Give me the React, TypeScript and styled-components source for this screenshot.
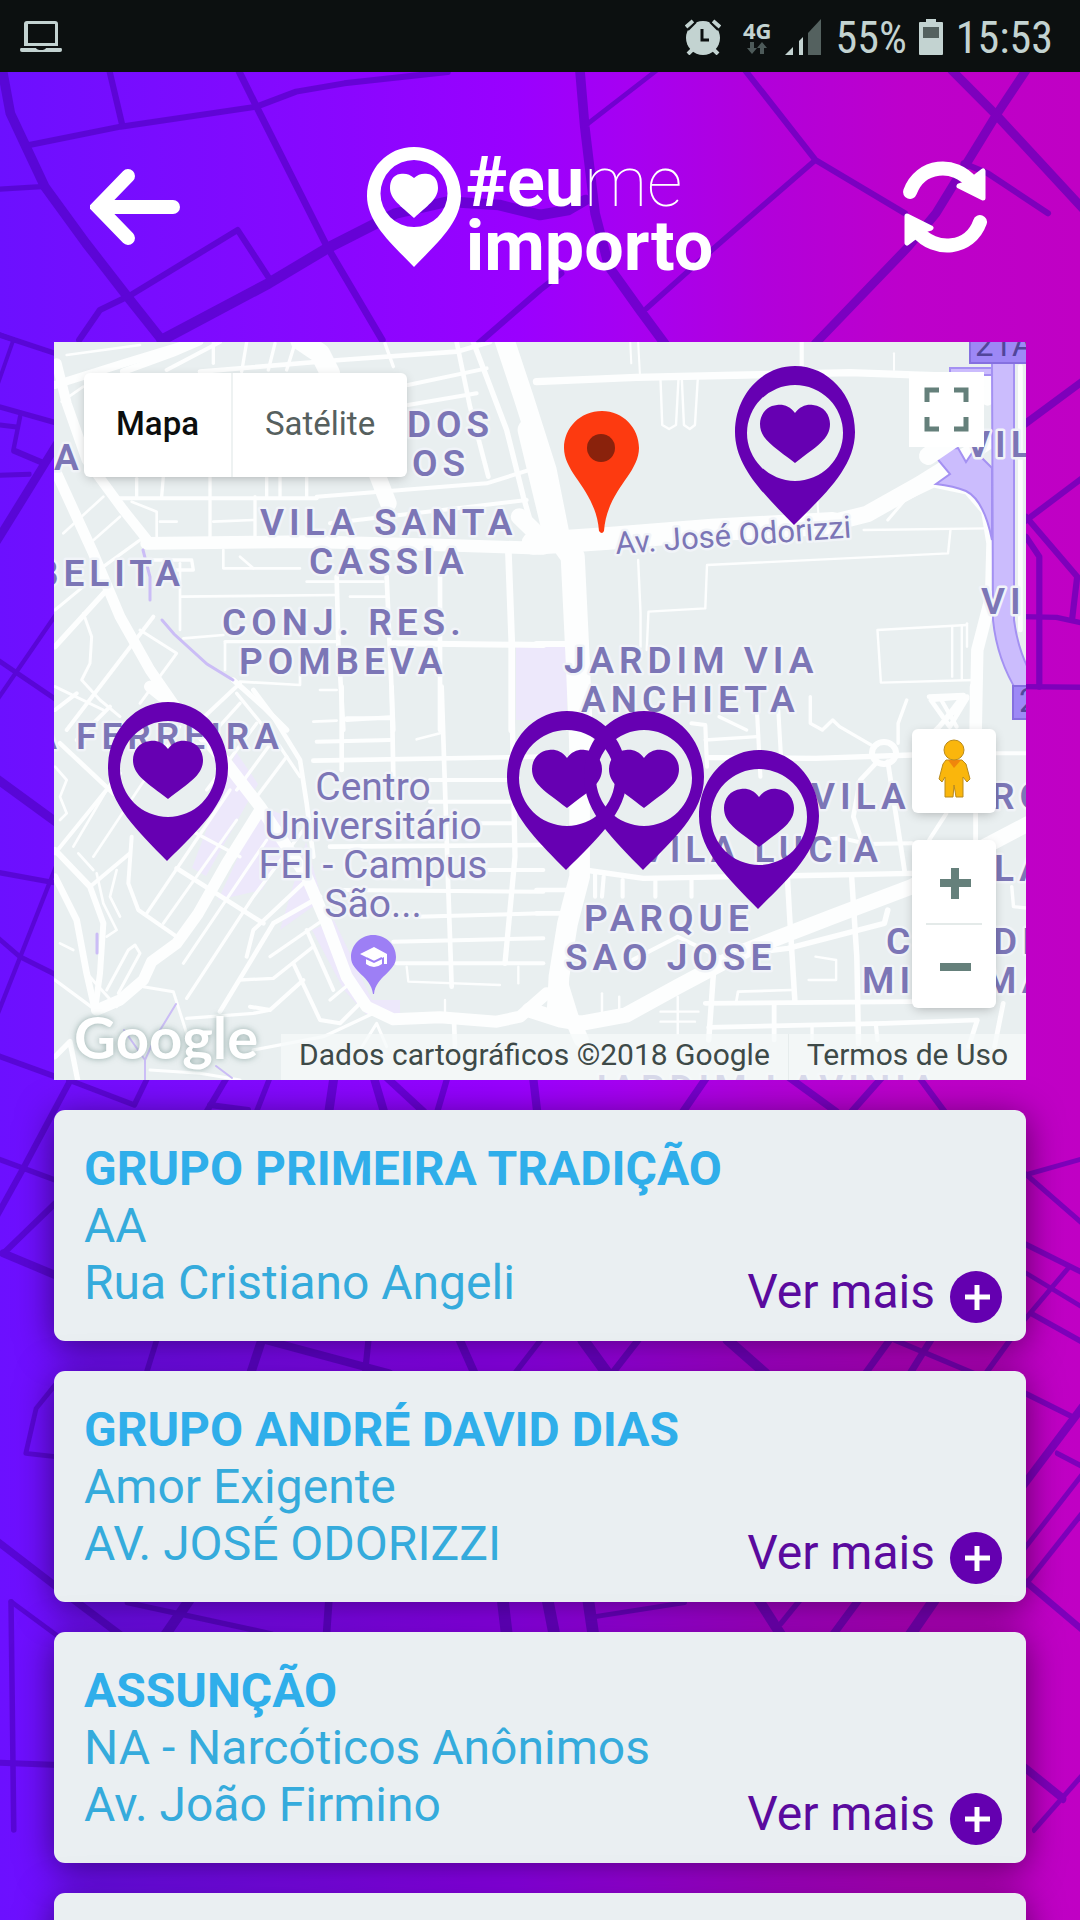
import React from "react";
import styled, { createGlobalStyle } from "styled-components";

type Line = [width: number, points: string];
type Sheet = { at: string; lines: Line[] };

const font = 'Roboto, "Noto Sans", sans-serif';

const GlobalStyle = createGlobalStyle`
  *, *::before, *::after { box-sizing: border-box; }
  body { margin: 0; font-family: ${font}; background: #8208ff; }
  button { font: inherit; border: 0; padding: 0; background: none; cursor: pointer; }
  h2, p { margin: 0; }
`;

const Screen = styled.div`
  position: relative;
  isolation: isolate;
  display: flex;
  flex-direction: column;
  height: 100vh;
  overflow: hidden;
  background: linear-gradient(90deg, #6c10ff 0%, #8309ff 25%, #9a00ff 48%, #a600f2 58%, #b200da 71%, #bd00cb 84%, #c000c4 100%);
`;

const Streets = styled.svg`
  position: absolute;
  inset: 0;
  z-index: -1;
  width: 100%;
  height: 100%;
  fill: none;
  stroke: #4800b4;
  stroke-linecap: round;
  stroke-linejoin: round;
`;

const StatusBar = styled.div`
  display: flex;
  align-items: center;
  justify-content: space-between;
  flex: none;
  height: 72px;
  padding: 2px 27px 0 20px;
  background: #0c1010;
  color: #c3d3d1;
`;

const StatusGroup = styled.div`
  display: flex;
  align-items: center;
`;

const StatusIcon = styled.svg<{ $w: number; $gap: number }>`
  width: ${(p) => p.$w}px;
  height: 36px;
  margin-right: ${(p) => p.$gap}px;
  fill: #c3d3d1;
`;

const Network = styled.span`
  display: flex;
  flex-direction: column;
  align-items: center;
  margin-right: 13px;
  font: 700 22px/20px "Open Sans", ${font};
  svg { width: 20px; height: 12px; margin-top: 2px; fill: #4d5a59; }
`;

const StatusText = styled.span<{ $gap?: number }>`
  margin-right: ${(p) => p.$gap ?? 0}px;
  padding-top: 2px;
  font: 400 44px/48px "Roboto Condensed", "Liberation Sans Narrow", ${font};
`;

const Header = styled.header`
  display: grid;
  grid-template-columns: 1fr auto 1fr;
  align-items: center;
  flex: none;
  height: 270px;
  padding: 0 90px;
`;

const IconButton = styled.button<{ $end?: boolean }>`
  justify-self: ${(p) => (p.$end ? "end" : "start")};
  width: 90px;
  height: 96px;
  svg { display: block; width: 90px; height: 96px; }
`;

const Brand = styled.div`
  display: flex;
  align-items: center;
  gap: 5px;
  color: #fff;
  svg { width: 94px; height: 120px; fill: #fff; }
`;

const BrandName = styled.div`
  padding-top: 13px;
  font: 700 70px/64px ${font};
`;

const BrandLine = styled.div`
  white-space: nowrap;
`;

const Thin = styled.span`
  font-weight: 100;
`;

const Content = styled.main`
  display: flex;
  flex-direction: column;
  gap: 30px;
  flex: 1;
  min-height: 0;
  padding: 0 54px 30px;
  overflow-y: auto;
  scrollbar-width: none;
`;

const MapBox = styled.section`
  position: relative;
  flex: none;
  aspect-ratio: 972 / 738;
  overflow: hidden;
  background: #e9eff0;
`;

const MapCanvas = styled.svg`
  display: block;
  width: 100%;
  height: 100%;
`;

const MapTypes = styled.div`
  position: absolute;
  top: 31px;
  left: 30px;
  display: flex;
  height: 104px;
  border-radius: 6px;
  background: #fff;
  box-shadow: 0 3px 12px -3px rgba(0, 0, 0, 0.3);
`;

const MapType = styled.button<{ $active?: boolean }>`
  padding: 0 32px 4px;
  font-size: 33px;
  font-weight: ${(p) => (p.$active ? 500 : 400)};
  color: ${(p) => (p.$active ? "#0c0e0e" : "#56605e")};
  & + & { border-left: 2px solid #eef2f2; }
`;

const Fullscreen = styled.button`
  position: absolute;
  top: 30px;
  right: 42px;
  width: 75px;
  height: 75px;
  background: #fff;
  svg { display: block; width: 75px; height: 75px; }
`;

const MapControls = styled.div`
  position: absolute;
  right: 30px;
  bottom: 72px;
  display: flex;
  flex-direction: column;
  gap: 27px;
`;

const ControlGroup = styled.div`
  display: flex;
  flex-direction: column;
  border-radius: 6px;
  background: #fff;
  box-shadow: 0 3px 12px -3px rgba(0, 0, 0, 0.3);
`;

const Control = styled.button`
  width: 84px;
  height: 84px;
  svg { display: block; width: 84px; height: 84px; }
`;

const Rule = styled.div`
  height: 2px;
  margin: -1px 14px;
  background: #e4eae9;
`;

const Google = styled.a`
  position: absolute;
  left: 20px;
  bottom: 10px;
  font: 700 58px/66px Lato, ${font};
  color: #fff;
  text-decoration: none;
  text-shadow: 0 0 6px rgba(120, 150, 145, 0.75);
`;

const Credits = styled.div`
  position: absolute;
  right: 0;
  bottom: 0;
  display: flex;
  background: rgba(246, 249, 250, 0.75);
  font-size: 30px;
  line-height: 42px;
  color: #3e4a48;
`;

const Credit = styled.span`
  padding: 0 18px 4px;
  & + & { border-left: 1px solid #e6ecec; }
  a { color: inherit; text-decoration: none; }
`;

const Card = styled.article`
  display: grid;
  grid-template-columns: 1fr auto;
  align-content: start;
  flex: none;
  min-height: 231px;
  padding: 30px 24px 18px 30px;
  border-radius: 11px;
  background: #eaeff2;
  box-shadow: 0 6px 36px rgba(0, 0, 0, 0.5);
`;

const Name = styled.h2`
  grid-column: 1 / -1;
  font-size: 48px;
  line-height: 57px;
  font-weight: 700;
  color: #2faeea;
`;

const Details = styled.div`
  padding-bottom: 12px;
  font-size: 48px;
  line-height: 57px;
  color: #35abdc;
`;

const More = styled.a`
  display: flex;
  align-self: end;
  gap: 15px;
  font-size: 48px;
  line-height: 42px;
  color: #5a0a9e;
  text-decoration: none;
  white-space: nowrap;
  svg { width: 52px; height: 52px; }
`;

/* Street lines behind the screen, grouped in tiles that each have their own scale. */
const streetTiles: Sheet[] = [
  {
    at: "translate(0 0) scale(.34435 .33333)",
    lines: [
      [28, "5,200 30,340 80,450 130,560 250,730 370,890 470,1020"],
      [18, "315,200 355,375"],
      [18, "85,435 350,380 745,320 860,275 1000,250 1300,216"],
      [16, "-10,568 120,560"],
      [20, "695,216 745,320 950,740 1110,1020"],
      [32, "470,1020 780,850 950,745 1150,640 1300,605 1450,615 1568,645 1650,630 1700,600"],
      [18, "230,1020 290,930 380,885 690,690 785,840"],
      [18, "1390,1030 1568,870 1630,820"],
      [14, "-10,1000 45,1022"],
    ],
  },
  {
    at: "translate(540 0) scale(.34435 .33333)",
    lines: [
      [28, "115,200 130,380 160,640 200,800 290,930 365,1035"],
      [14, "140,370 340,210"],
      [18, "595,210 800,480 1060,640"],
      [16, "800,480 510,740 310,925"],
      [26, "1195,210 1325,345 1580,630"],
      [26, "1415,205 1325,345 1150,640 1070,740 800,1030"],
      [18, "1230,490 1300,520 1475,640"],
    ],
  },
  {
    at: "translate(540 330) scale(.34435 .33333)",
    lines: [
      [22, "1400,288 1580,150"],
      [18, "1400,580 1580,440"],
      [18, "1411,560 1560,740 1545,870"],
      [18, "1411,620 1450,680 1450,1070"],
      [16, "1400,860 1500,862 1580,880"],
      [16, "1400,1070 1580,1072"],
    ],
  },
  {
    at: "translate(960 1080) scale(.33333 .49743)",
    lines: [
      [10, "190,192 370,158"],
      [12, "190,185 370,290"],
      [12, "190,328 370,388"],
      [10, "190,385 370,458"],
      [12, "190,485 325,378"],
      [12, "215,470 370,528"],
      [12, "190,628 340,678"],
      [20, "190,815 370,655"],
      [11, "290,750 370,778"],
      [12, "190,945 370,790"],
      [13, "190,1020 370,868"],
      [15, "200,1010 370,1107"],
      [18, "190,1380 310,1445"],
      [12, "222,1508 370,1395"],
    ],
  },
  {
    at: "translate(0 330) scale(.33333 .49743)",
    lines: [
      [11, "-10,8 170,48"],
      [11, "40,20 -10,115"],
      [11, "-10,153 170,187"],
      [13, "60,175 40,242 125,266"],
      [10, "-10,190 50,195"],
      [10, "-10,292 90,290"],
      [22, "-10,425 170,230"],
      [11, "-10,745 170,570"],
      [11, "-10,662 170,744"],
      [20, "-10,902 170,990"],
      [11, "-10,1090 170,1112"],
      [11, "-10,1220 60,1260 170,1297"],
      [12, "-10,1380 170,1075"],
      [12, "-10,1458 170,1502"],
    ],
  },
  {
    at: "translate(0 1080) scale(.34435 .33333)",
    lines: [
      [16, "-10,235 160,300"],
      [18, "-10,410 65,270 210,-10"],
      [16, "200,0 390,75 430,-10"],
      [18, "10,520 160,370"],
      [24, "10,520 160,585"],
      [18, "600,95 660,-10"],
      [16, "745,95 785,-10"],
      [26, "955,95 970,-10"],
      [24, "1085,-10 1115,95"],
      [22, "1120,-10 1230,95"],
      [18, "1270,95 1300,-10"],
      [24, "1548,-10 1560,95"],
      [18, "610,75 720,90"],
      [16, "455,780 425,880"],
      [26, "760,780 728,880"],
      [24, "770,780 1130,880"],
      [18, "1070,780 1060,880"],
      [24, "1335,780 1378,880"],
      [16, "1570,780 1495,880"],
      [14, "160,915 105,985 75,1120 160,1130"],
    ],
  },
  {
    at: "translate(540 1080) scale(.34435 .33333)",
    lines: [
      [22, "485,-10 415,95"],
      [22, "720,-10 860,95"],
      [20, "995,-10 905,95"],
      [18, "1100,-10 1175,95"],
      [34, "125,780 195,880"],
      [20, "285,780 210,880"],
      [30, "545,780 655,880"],
      [20, "1015,780 945,880"],
      [20, "1135,780 1075,880"],
      [16, "1030,780 1260,880"],
      [16, "1365,780 1295,880"],
    ],
  },
  {
    at: "translate(0 1500) scale(.34435 .33333)",
    lines: [
      [22, "-10,122 170,265 350,405"],
      [16, "32,305 40,990"],
      [14, "32,305 170,410"],
      [18, "-10,788 170,795"],
      [16, "370,308 790,402"],
      [30, "550,300 480,405"],
      [22, "955,300 948,405"],
      [34, "1460,300 1472,405"],
    ],
  },
  {
    at: "translate(540 1500) scale(.34435 .33333)",
    lines: [
      [34, "22,300 42,405"],
      [34, "140,300 155,405"],
      [14, "160,350 420,308"],
      [30, "635,300 700,405"],
      [16, "755,300 700,370"],
      [22, "925,300 850,405"],
      [32, "1145,300 1075,405"],
    ],
  },
];

/* White roads of the map, same tile scheme. */
const roadTiles: Sheet[] = [
  {
    at: "translate(40 330) scale(.33333)",
    lines: [
      [30, "50,100 80,220 140,390 250,540 330,640"],
      [32, "50,430 160,670 240,860 330,1020 420,1150"],
      [38, "320,640 800,635 1200,645 1510,655"],
      [60, "780,30 840,70 870,130"],
      [50, "1010,430 1045,520"],
      [60, "1390,20 1450,200 1520,420 1560,620"],
      [24, "45,165 250,100 460,36"],
      [8, "80,75 300,45"],
      [20, "250,125 400,70 480,36"],
      [14, "480,125 900,90 1250,65 1350,36"],
      [12, "380,120 540,36"],
      [10, "605,125 620,36"],
      [10, "520,30 520,100"],
      [10, "685,120 705,40"],
      [10, "740,120 765,40"],
      [10, "1035,40 1060,110"],
      [14, "1250,36 1290,230 1345,440"],
      [16, "1300,36 1400,300 1450,500 1490,640"],
      [12, "1104,165 1340,115"],
      [12, "1104,225 1310,190"],
      [8, "65,215 130,170"],
      [12, "225,505 830,505"],
      [12, "830,500 1340,460 1500,410"],
      [12, "870,580 1460,510"],
      [10, "510,440 510,620"],
      [10, "370,440 365,500"],
      [10, "290,445 290,500"],
      [10, "645,500 645,620"],
      [10, "680,440 680,500"],
      [10, "720,440 720,500"],
      [10, "800,440 800,500"],
      [8, "275,515 350,545 350,620"],
      [8, "360,575 410,575"],
      [8, "520,575 640,570"],
      [8, "70,610 190,500"],
      [8, "150,640 240,560"],
      [10, "190,710 300,630"],
      [10, "400,720 460,720 455,690 330,690"],
      [8, "550,660 550,715 780,715"],
      [8, "600,680 640,715"],
      [16, "45,950 200,780"],
      [9, "45,840 130,770"],
      [9, "130,850 155,920 150,1000 125,1050 180,1110 240,1160"],
      [9, "45,1070 190,1140"],
      [12, "80,1200 340,860"],
      [9, "300,900 410,970 300,1120"],
      [8, "425,800 890,795"],
      [8, "420,700 420,900"],
      [8, "800,755 1030,755"],
      [14, "890,740 895,940 910,1200"],
      [14, "1040,740 1060,1200"],
      [14, "1200,740 1200,1200"],
      [20, "1405,660 1415,930 1415,1200"],
      [18, "1060,940 1510,945"],
      [10, "555,935 890,935"],
      [8, "555,940 555,1020"],
      [8, "430,925 550,915"],
      [8, "600,1055 780,1065 780,1000"],
      [8, "840,1080 890,1080"],
      [12, "920,1165 1050,1165"],
      [8, "930,800 1040,800"],
      [16, "580,1050 670,1130 740,1200"],
      [12, "600,1060 440,1210"],
    ],
  },
  {
    at: "translate(540 330) scale(.34435 .33333)",
    lines: [
      [70, "-30,300 40,600 95,680 110,1000 120,1250"],
      [50, "-60,560 20,640"],
      [22, "-10,155 280,142 600,135 900,128 1230,140"],
      [68, "-20,640 60,635 200,625 500,600 850,580"],
      [50, "850,578 950,552 1100,465 1240,375 1320,320"],
      [6, "262,36 265,100"],
      [6, "285,36 290,130"],
      [12, "760,36 760,120"],
      [6, "1028,70 1028,120"],
      [7, "350,150 355,285 375,297 395,285 402,150"],
      [7, "412,150 418,285 435,297 450,285 458,150"],
      [6, "805,500 810,580"],
      [7, "285,690 292,850 292,950"],
      [7, "310,960 315,845 480,835 485,705 1185,670 1192,600"],
      [7, "1240,885 980,900 990,1058 1260,1050"],
      [7, "1197,890 1197,1040"],
      [7, "1225,890 1225,1050"],
      [7, "1240,880 1240,950"],
      [36, "1310,800 1270,960 1265,1220"],
      [18, "1150,465 1240,485 1290,545 1305,640 1300,840"],
      [7, "940,600 1300,595"],
      [9, "1010,570 1060,510 1160,460"],
      [34, "1260,150 1310,150 1300,210"],
      [14, "1395,110 1395,900"],
      [18, "-10,942 80,942"],
      [14, "1240,1100 1135,1110 1190,1190 1240,1105 1120,1230"],
    ],
  },
  {
    at: "translate(40 690) scale(.33333)",
    lines: [
      [34, "170,960 240,930 310,870 335,815 410,760 475,670 560,520 660,360"],
      [36, "330,-10 430,70 560,220 660,350 800,560 860,700 920,860 980,950 1060,988 1200,982 1370,995 1440,980 1520,910"],
      [14, "640,0 700,80 780,210 800,340 820,500"],
      [10, "590,10 720,170 780,260"],
      [20, "45,560 110,690 140,850 165,960"],
      [18, "45,480 150,590 190,700 180,850 165,960"],
      [12, "150,590 270,490"],
      [12, "45,490 240,250"],
      [14, "60,160 220,310"],
      [12, "110,150 210,50"],
      [12, "45,60 110,10"],
      [12, "275,440 265,580 295,660 410,740"],
      [10, "320,670 570,300"],
      [14, "410,535 670,700"],
      [9, "370,700 590,390"],
      [9, "430,820 680,450"],
      [10, "440,925 640,620 790,420"],
      [8, "160,500 420,110"],
      [8, "100,470 200,300"],
      [10, "450,420 600,500"],
      [8, "170,550 190,640 230,720 200,740"],
      [8, "230,540 210,620 240,680"],
      [8, "115,490 160,540"],
      [8, "45,230 80,270 60,320 80,370 60,390"],
      [10, "600,40 420,240"],
      [10, "650,100 500,300"],
      [10, "700,150 590,300"],
      [10, "740,200 650,320"],
      [14, "540,965 640,800 700,700 840,620"],
      [12, "620,800 640,720 800,570"],
      [10, "600,870 700,865 820,770"],
      [12, "630,950 690,960 790,870"],
      [10, "690,800 850,690"],
      [12, "760,820 840,990 900,1000 960,940"],
      [12, "800,720 880,900"],
      [10, "870,930 930,880"],
      [10, "440,985 640,970 690,960"],
      [10, "640,1080 850,1040 1000,970"],
      [14, "905,-10 905,240"],
      [14, "1055,-10 1060,260"],
      [14, "1205,-10 1225,600 1235,890"],
      [16, "1415,-10 1425,500 1395,820"],
      [14, "820,212 1510,200"],
      [12, "920,90 1050,82"],
      [12, "830,155 1050,150"],
      [8, "820,95 890,92"],
      [8, "1130,148 1200,130"],
      [12, "1170,270 1410,270"],
      [12, "1170,335 1410,335"],
      [12, "1320,400 1415,400"],
      [14, "870,470 1510,465"],
      [12, "1340,540 1510,540"],
      [12, "900,600 1510,605"],
      [12, "1130,680 1510,670"],
      [12, "1060,755 1510,745"],
      [12, "1070,820 1510,820"],
      [7, "1100,830 1105,875 1380,885"],
      [7, "1435,830 1435,880"],
      [10, "45,870 160,955"],
      [16, "45,1100 90,1055 115,1180"],
      [9, "310,890 400,905 440,1030"],
      [9, "200,900 265,780 285,765 300,790 235,910"],
      [9, "140,850 230,950"],
      [14, "1242,990 1245,1070"],
      [7, "1215,930 1215,980"],
      [9, "960,1080 1010,1000 1040,1070"],
      [9, "330,1140 480,1150 600,1170"],
      [8, "60,760 100,780"],
    ],
  },
  {
    at: "translate(540 690) scale(.34435 .33333)",
    lines: [
      [60, "115,-10 115,560 80,700 55,860 50,960"],
      [46, "-30,960 60,990 120,1000 250,975 400,890 600,780 850,680 1080,590 1290,470 1420,400"],
      [44, "60,880 90,980 120,1050"],
      [14, "-10,600 80,600"],
      [14, "-10,670 80,670"],
      [16, "130,540 300,565 850,555 1080,550"],
      [16, "490,203 800,205 1080,195"],
      [10, "480,150 630,140"],
      [12, "440,100 480,105 485,230"],
      [10, "520,80 600,120"],
      [12, "630,60 640,260"],
      [12, "692,60 700,205"],
      [12, "800,450 880,445 950,462 1080,460"],
      [10, "1040,160 1040,100 1065,30"],
      [10, "970,170 870,110 850,90 820,120 785,100 785,20"],
      [14, "980,215 930,270 910,380 940,470"],
      [14, "1010,215 1030,350 1060,550"],
      [12, "1180,370 1130,450"],
      [14, "1265,360 1265,480"],
      [34, "1265,-10 1265,130"],
      [14, "1130,20 1230,15 1160,110"],
      [12, "1160,20 1210,110"],
      [12, "1320,190 1420,190"],
      [10, "1370,590 1375,650 1420,655"],
      [12, "160,550 160,620"],
      [12, "185,560 180,620"],
      [12, "240,570 240,620"],
      [12, "335,570 335,620"],
      [12, "440,570 440,620"],
      [16, "715,500 725,680 740,930"],
      [16, "905,560 920,800 925,1060"],
      [16, "505,830 490,1050"],
      [12, "250,820 400,740 520,800"],
      [14, "480,940 1080,935"],
      [14, "490,1012 1000,1000 1270,990 1245,1070"],
      [8, "570,935 575,905 730,900"],
      [14, "680,940 680,1050"],
      [10, "790,1010 790,1050"],
      [12, "975,1000 980,1050"],
      [16, "600,790 720,775 1000,700 1010,660"],
      [7, "800,800 860,810 860,870 780,870"],
      [7, "350,965 460,965"],
      [7, "400,920 400,1030"],
      [7, "350,995 450,995"],
      [7, "180,910 180,1000"],
      [7, "230,920 230,960"],
      [14, "1345,940 1320,1070"],
    ],
  },
];

type Label = { x: number; y: number; text: string; end?: boolean };

const districts: Label[] = [
  { x: 407, y: 437, text: "DOS" },
  { x: 412, y: 476, text: "OS" },
  { x: 54, y: 470, text: "A" },
  { x: 185, y: 586, text: "BELITA", end: true },
  { x: 260, y: 535, text: "VILA SANTA" },
  { x: 309, y: 574, text: "CASSIA" },
  { x: 222, y: 635, text: "CONJ. RES." },
  { x: 239, y: 674, text: "POMBEVA" },
  { x: 564, y: 673, text: "JARDIM VIA" },
  { x: 581, y: 712, text: "ANCHIETA" },
  { x: 284, y: 749, text: "A FERREIRA", end: true },
  { x: 811, y: 809, text: "VILA" },
  { x: 991, y: 809, text: "RO" },
  { x: 883, y: 862, text: "VILA LUCIA", end: true },
  { x: 584, y: 931, text: "PARQUE" },
  { x: 565, y: 970, text: "SAO JOSE" },
  { x: 886, y: 954, text: "C" },
  { x: 993, y: 954, text: "DI" },
  { x: 862, y: 993, text: "MI" },
  { x: 984, y: 993, text: "MA" },
  { x: 994, y: 881, text: "LA" },
  { x: 966, y: 457, text: "VIL" },
  { x: 981, y: 614, text: "VI" },
  { x: 586, y: 1101, text: "JARDIM LAVINIA" },
];

const pins = [
  [735, 366],
  [108, 702],
  [507, 711],
  [584, 711],
  [699, 750],
];

const groups = [
  { name: "GRUPO PRIMEIRA TRADIÇÃO", kind: "AA", street: "Rua Cristiano Angeli" },
  { name: "GRUPO ANDRÉ DAVID DIAS", kind: "Amor Exigente", street: "AV. JOSÉ ODORIZZI" },
  { name: "ASSUNÇÃO", kind: "NA - Narcóticos Anônimos", street: "Av. João Firmino" },
];

const Tiles = ({ tiles }: { tiles: Sheet[] }) => (
  <>
    {tiles.map((tile) => (
      <g key={tile.at} transform={tile.at}>
        {tile.lines.map(([width, points]) => (
          <polyline key={points} points={points} strokeWidth={width} />
        ))}
      </g>
    ))}
  </>
);

const HeartPin = ({ x, y }: { x: number; y: number }) => (
  <g transform={`translate(${x} ${y})`} fill="#6600b2">
    <path
      fillRule="evenodd"
      d="M60 0C93 0 120 29 120 66C120 102 88 130 59 159C31 130 0 102 0 66C0 29 27 0 60 0ZM60 19A48 48 0 1 0 60 115A48 48 0 1 0 60 19Z"
    />
    <path d="M60 47C65 40 72 38 78 39C89 40 95 49 95 58C95 73 82 80 60 97C38 80 25 73 25 58C25 49 31 40 42 39C48 38 55 40 60 47Z" />
  </g>
);

const MapDrawing = () => (
  <MapCanvas viewBox="54 342 972 738" preserveAspectRatio="xMidYMid slice">
    <g fill="#ede8fb">
      <path d="M516 646H567V720H516Z" />
      <path d="M236 752L258 784L206 876L192 868Z" />
      <path d="M262 806L300 822L262 890L218 900Z" />
      <path d="M306 842L322 900L280 930Z" />
      <path d="M312 930L334 920L372 1000H400V1014H366L344 990Z" />
    </g>
    <g fill="none" stroke="#fdfefe" strokeLinecap="round" strokeLinejoin="round">
      <Tiles tiles={roadTiles} />
      <ellipse cx="884" cy="753" rx="12" ry="11" strokeWidth="6" />
    </g>
    <g fill="none" stroke="#cbbdf6" strokeWidth="3" strokeLinecap="round">
      <path d="M143 550L150 577L150 600M162 620L174 634L207 664L233 680" />
      <path d="M97 934V953" />
      <path d="M176 1004L154 1040L145 1060V1080M124 1030L145 1060M216 1066L232 1078" strokeWidth="2" />
    </g>
    <g fill="#cbbcfd" stroke="#a491f2" strokeWidth="2">
      <path d="M950 368H992V375H950Z" />
      <path d="M930 450L958 448L966 462L974 450L992 468V540Q984 500 966 491Q954 486 936 484L950 474Z" />
      <path d="M992 360H1014V620Q1018 650 1030 672V710Q998 670 993 620Z" />
    </g>
    <path d="M928 456L975 424" stroke="#fdfefe" strokeWidth="18" strokeLinecap="round" />
    <g fill="#9d88f6" stroke="#8570e0" strokeWidth="2">
      <rect x="970" y="330" width="70" height="33" />
      <rect x="1013" y="686" width="40" height="33" />
    </g>
    <g fontFamily="Roboto, sans-serif" fontSize="33" fill="#51459a">
      <text x="975" y="356">21A</text>
      <text x="1019" y="712">2</text>
    </g>
    <g
      fontFamily="Roboto, sans-serif"
      fill="#7c76b6"
      stroke="#f1f4f8"
      strokeWidth="5"
      strokeLinejoin="round"
      paintOrder="stroke"
    >
      <g fontSize="37" fontWeight="600" letterSpacing="5">
        {districts.map((d) => (
          <text key={d.text + d.x} x={d.x} y={d.y} textAnchor={d.end ? "end" : "start"}>
            {d.text}
          </text>
        ))}
      </g>
      <g fontSize="39" textAnchor="middle">
        <text x="373" y="800">Centro</text>
        <text x="373" y="839">Universitário</text>
        <text x="373" y="878">FEI - Campus</text>
        <text x="373" y="917">São...</text>
      </g>
      <text fontSize="31" transform="translate(616 554) rotate(-4)">
        Av. José Odorizzi
      </text>
    </g>
    <path
      fill="#9d7ff5"
      d="M373 935C386 935 396 945 396 957C396 972 376 976 374 994H373C371 976 351 972 351 957C351 945 361 935 373 935Z"
    />
    <path fill="#fff" d="M360 954L374 947L387 954V964H384V957L382 958V964Q374 970 366 964V957Z" />
    <path fill="none" stroke="#9d7ff5" strokeWidth="2" d="M366 958L374 962L382 958" />
    <path
      fill="#fd3a10"
      d="M602 411C623 411 639 428 639 448C639 474 607 490 604 531Q602 535 599 531C596 490 564 474 564 448C564 428 580 411 602 411Z"
    />
    <circle cx="601" cy="448" r="14" fill="#8a220c" />
    {pins.map(([x, y]) => (
      <HeartPin key={x} x={x} y={y} />
    ))}
  </MapCanvas>
);

export default function App() {
  return (
    <Screen>
      <GlobalStyle />
      <Streets viewBox="0 0 1080 1920" preserveAspectRatio="xMidYMin slice" opacity="0.54">
        <Tiles tiles={streetTiles} />
      </Streets>

      <StatusBar>
        <StatusIcon viewBox="0 0 42 36" $w={42} $gap={0}>
          <path d="M7 2H35Q38 2 38 5V27H4V5Q4 2 7 2ZM8 5V24H35V5Z" fillRule="evenodd" />
          <path d="M1 29H16Q17 31 21 31Q25 31 26 29H41Q42 29 42 31Q42 33 40 33H2Q0 33 0 31Q0 29 1 29Z" />
        </StatusIcon>
        <StatusGroup>
          <StatusIcon viewBox="0 0 36 36" $w={36} $gap={22}>
            <circle cx="18" cy="19" r="17" />
            <path d="M17 10V21H24" stroke="#0c1010" strokeWidth="3" fill="none" />
            <path d="M1 8L8 2M28 2L35 8M7 31L3 35M29 31L33 35" stroke="#c3d3d1" strokeWidth="4" />
            <path d="M3 11L11 3M25 3L33 11" stroke="#0c1010" strokeWidth="2" />
          </StatusIcon>
          <Network>
            4G
            <svg viewBox="0 0 20 12">
              <path d="M3 0H7V6H10L5 12L0 6H3ZM13 12H17V6H20L15 0L10 6H13Z" />
            </svg>
          </Network>
          <StatusIcon viewBox="0 0 36 36" $w={36} $gap={15}>
            <path d="M0 36L8 28V36ZM14 22L18 18V36H14Z" />
            <path d="M23 14L36 0V36H23Z" fill="#54615f" />
          </StatusIcon>
          <StatusText $gap={12}>55%</StatusText>
          <StatusIcon viewBox="0 0 24 36" $w={24} $gap={13}>
            <path d="M7 0H17V3H23Q24 3 24 4V35Q24 36 23 36H1Q0 36 0 35V4Q0 3 1 3H7Z" />
            <path d="M4 8H20V19H4Z" fill="#54615f" />
          </StatusIcon>
          <StatusText>15:53</StatusText>
        </StatusGroup>
      </StatusBar>

      <Header>
        <IconButton type="button" aria-label="Voltar">
          <svg viewBox="90 159 90 96" fill="none" stroke="#fff" strokeWidth="14" strokeLinecap="round">
            <path d="M128 176L98 207L128 238" strokeLinejoin="miter" />
            <path d="M102 207H173" />
          </svg>
        </IconButton>
        <Brand>
          <svg viewBox="0 0 94 120">
            <path
              fillRule="evenodd"
              d="M47 0C74 0 94 22 94 49C94 76 68 98 47 120C26 98 0 76 0 49C0 22 20 0 47 0ZM47 13A33 33 0 1 0 47 80A33 33 0 1 0 47 13Z"
            />
            <path d="M47 31C51 27 56 26 61 27C68 28 71 34 71 41C71 52 60 59 47 71C34 59 23 52 23 41C23 34 26 28 33 27C38 26 43 27 47 31Z" />
          </svg>
          <BrandName>
            <BrandLine>
              #eu<Thin>me</Thin>
            </BrandLine>
            <BrandLine>importo</BrandLine>
          </BrandName>
        </Brand>
        <IconButton type="button" aria-label="Atualizar" $end>
          <svg viewBox="900 159 90 96" fill="none" stroke="#fff" strokeLinecap="round" strokeLinejoin="round">
            <path d="M910 192C920 164 955 161 972 183" strokeWidth="14" />
            <path d="M980 222C970 250 935 253 917 231" strokeWidth="14" />
            <path d="M983 171V198L959 186L966 184Z" fill="#fff" strokeWidth="5" />
            <path d="M907 243V216L931 228L924 230Z" fill="#fff" strokeWidth="5" />
          </svg>
        </IconButton>
      </Header>

      <Content>
        <MapBox>
          <MapDrawing />
          <MapTypes>
            <MapType type="button" $active>
              Mapa
            </MapType>
            <MapType type="button">Satélite</MapType>
          </MapTypes>
          <Fullscreen type="button" aria-label="Tela cheia">
            <svg viewBox="0 0 75 75" fill="none" stroke="#65807b" strokeWidth="5">
              <path d="M18 30V18H30M45 18H57V30M57 45V57H45M30 57H18V45" />
            </svg>
          </Fullscreen>
          <MapControls>
            <ControlGroup>
              <Control type="button" aria-label="Street View">
                <svg viewBox="0 0 84 84" fill="#fab60c" stroke="#b98a1c" strokeWidth="1">
                  <path d="M34 31H50L54 35L58 50L55 53L51 48V68H44L42 56L41 68H33V48L30 53L27 50L31 35Z" />
                  <path d="M36 31H49L42 39Z" fill="#f0860c" stroke="none" />
                  <circle cx="42" cy="21" r="10" />
                </svg>
              </Control>
            </ControlGroup>
            <ControlGroup>
              <Control type="button" aria-label="Aumentar zoom">
                <svg viewBox="0 0 84 84" fill="none" stroke="#65807b" strokeWidth="8">
                  <path d="M28 43H59M43 28V59" />
                </svg>
              </Control>
              <Rule />
              <Control type="button" aria-label="Diminuir zoom">
                <svg viewBox="0 0 84 84" fill="none" stroke="#65807b" strokeWidth="8">
                  <path d="M28 43H59" />
                </svg>
              </Control>
            </ControlGroup>
          </MapControls>
          <Google href="#google">Google</Google>
          <Credits>
            <Credit>Dados cartográficos ©2018 Google</Credit>
            <Credit>
              <a href="#termos">Termos de Uso</a>
            </Credit>
          </Credits>
        </MapBox>

        {groups.map((g) => (
          <Card key={g.name}>
            <Name>{g.name}</Name>
            <Details>
              <p>{g.kind}</p>
              <p>{g.street}</p>
            </Details>
            <More href="#detalhes">
              Ver mais
              <svg viewBox="0 0 52 52">
                <circle cx="26" cy="26" r="26" fill="#6400b0" />
                <path d="M15 26H40M27 14V39" stroke="#fff" strokeWidth="5" />
              </svg>
            </More>
          </Card>
        ))}
        <Card />
      </Content>
    </Screen>
  );
}
